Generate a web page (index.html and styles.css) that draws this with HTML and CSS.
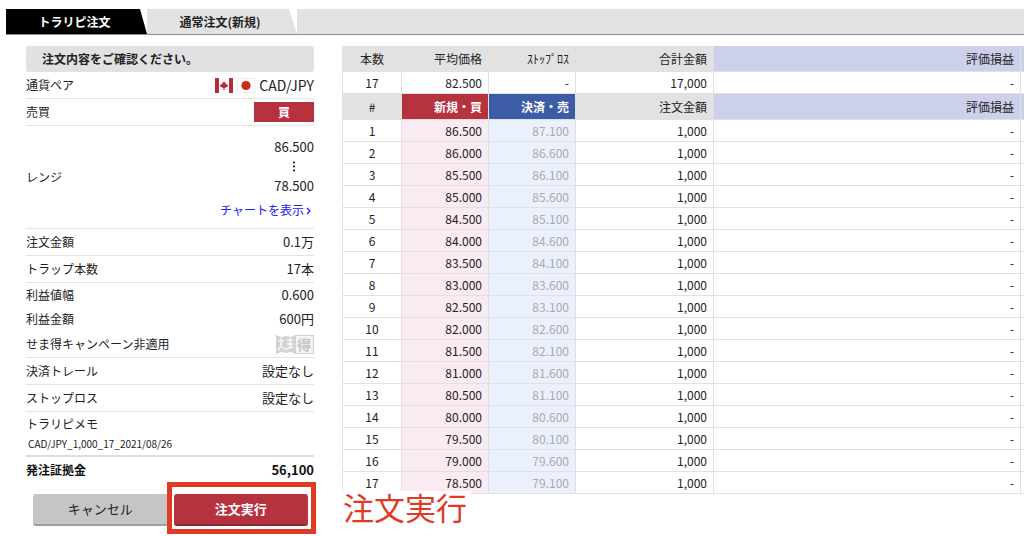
FILE: index.html
```html
<!DOCTYPE html>
<html lang="ja">
<head>
<meta charset="utf-8">
<meta name="viewport" content="width=device-width, initial-scale=1">
<title>トラリピ注文</title>
<link rel="stylesheet" href="styles.css">
</head>
<body>
<nav class="tabs">
  <a class="tab tab-active" href="#repeat">トラリピ注文</a>
  <a class="tab" href="#normal">通常注文(新規)</a>
  <span class="tab-rest"></span>
</nav>
<main class="content">
  <section class="summary">
    <h1 class="notice">注文内容をご確認ください。</h1>
    <dl class="details">
      <div class="row"><dt>通貨ペア</dt>
        <dd class="pair">
          <svg class="flag" viewBox="0 0 18 15" aria-hidden="true"><path fill="#fff" d="M0 0h18v15H0z"/><path fill="#b9283c" d="M0 0h4v15H0zM14 0h4v15h-4z"/><path fill="#b9283c" d="M9 3l1 2 1-.5-.2 2L13 6l-.5 1.500.700.700-3.700 2V12h-1v-1.800l-3.700-2 .700-.700L5 6l2.200.500L7 4.500 8 5z"/></svg>
          <svg class="flag" viewBox="0 0 18 15" aria-hidden="true"><path fill="#fff" stroke="#eee" d="M.5.5h17v14H.5z"/><circle cx="9" cy="7.500" r="4.600" fill="#c92a1c"/></svg>
          <span>CAD/JPY</span>
        </dd></div>
      <div class="row"><dt>売買</dt><dd class="side">買</dd></div>
      <div class="row row-range"><dt>レンジ</dt>
        <dd class="range">
          <span class="range-values"><span>86.500</span>
            <svg class="dots" viewBox="0 0 4 12" aria-hidden="true"><circle cx="2" cy="2" r="1"/><circle cx="2" cy="6" r="1"/><circle cx="2" cy="10" r="1"/></svg>
            <span>78.500</span></span>
          <a class="chart-link" href="#chart">チャートを表示<svg class="chevron" viewBox="0 0 6 8" aria-hidden="true"><path d="M1 1l3 3-3 3" fill="none" stroke="currentColor" stroke-width="1.300"/></svg></a>
        </dd></div>
      <div class="row"><dt>注文金額</dt><dd>0.1万</dd></div>
      <div class="row"><dt>トラップ本数</dt><dd>17本</dd></div>
      <div class="row row-plain"><dt>利益値幅</dt><dd>0.600</dd></div>
      <div class="row row-plain"><dt>利益金額</dt><dd>600円</dd></div>
      <div class="row"><dt>せま得キャンペーン非適用</dt>
        <dd><svg class="badge" viewBox="0 0 38 19" role="img" aria-label="せま得"><path fill="#d2d2d2" d="M0 0l5 2 5-1 5 1 4-2h19v19H19l-4-2-5 1-5-1-5 2z"/><path fill="#f4f4f4" d="M20 1h17v17H20z"/><path stroke="#f8f8f8" stroke-width="1.500" fill="none" d="M2 6h6M5 3v8l-3 4M11 5h6M11 9h6M14 3v10M10 14l7-2M6 12l4 3"/><text x="21" y="15" class="badge-text">得</text></svg></dd></div>
      <div class="row"><dt>決済トレール</dt><dd>設定なし</dd></div>
      <div class="row"><dt>ストップロス</dt><dd>設定なし</dd></div>
      <div class="row row-memo"><dt>トラリピメモ</dt><dd class="memo">CAD/JPY_1,000_17_2021/08/26</dd></div>
      <div class="row row-total"><dt>発注証拠金</dt><dd>56,100</dd></div>
    </dl>
    <div class="actions">
      <button class="button" type="button">キャンセル</button>
      <div class="submit">
        <button class="button button-primary" type="button">注文実行</button>
        <span class="callout-frame"></span>
        <span class="callout-text">注文実行</span>
      </div>
    </div>
  </section>
  <section class="orders">
    <table class="grid">
      <colgroup><col class="col-no"><col class="col-price"><col class="col-price"><col class="col-amount"><col><col class="col-next"></colgroup>
      <tbody>
        <tr><th>本数</th><th>平均価格</th><th>ｽﾄｯﾌﾟﾛｽ</th><th>合計金額</th><th class="profit">評価損益</th><th class="profit"></th></tr>
        <tr><td>17</td><td>82.500</td><td>-</td><td>17,000</td><td>-</td><td></td></tr>
        <tr><th>#</th><th class="buy-head">新規・買</th><th class="sell-head">決済・売</th><th>注文金額</th><th class="profit">評価損益</th><th class="profit"></th></tr>
      </tbody>
      <tbody class="lines">
        <tr><td>1</td><td>86.500</td><td>87.100</td><td>1,000</td><td>-</td><td></td></tr>
        <tr><td>2</td><td>86.000</td><td>86.600</td><td>1,000</td><td>-</td><td></td></tr>
        <tr><td>3</td><td>85.500</td><td>86.100</td><td>1,000</td><td>-</td><td></td></tr>
        <tr><td>4</td><td>85.000</td><td>85.600</td><td>1,000</td><td>-</td><td></td></tr>
        <tr><td>5</td><td>84.500</td><td>85.100</td><td>1,000</td><td>-</td><td></td></tr>
        <tr><td>6</td><td>84.000</td><td>84.600</td><td>1,000</td><td>-</td><td></td></tr>
        <tr><td>7</td><td>83.500</td><td>84.100</td><td>1,000</td><td>-</td><td></td></tr>
        <tr><td>8</td><td>83.000</td><td>83.600</td><td>1,000</td><td>-</td><td></td></tr>
        <tr><td>9</td><td>82.500</td><td>83.100</td><td>1,000</td><td>-</td><td></td></tr>
        <tr><td>10</td><td>82.000</td><td>82.600</td><td>1,000</td><td>-</td><td></td></tr>
        <tr><td>11</td><td>81.500</td><td>82.100</td><td>1,000</td><td>-</td><td></td></tr>
        <tr><td>12</td><td>81.000</td><td>81.600</td><td>1,000</td><td>-</td><td></td></tr>
        <tr><td>13</td><td>80.500</td><td>81.100</td><td>1,000</td><td>-</td><td></td></tr>
        <tr><td>14</td><td>80.000</td><td>80.600</td><td>1,000</td><td>-</td><td></td></tr>
        <tr><td>15</td><td>79.500</td><td>80.100</td><td>1,000</td><td>-</td><td></td></tr>
        <tr><td>16</td><td>79.000</td><td>79.600</td><td>1,000</td><td>-</td><td></td></tr>
        <tr><td>17</td><td>78.500</td><td>79.100</td><td>1,000</td><td>-</td><td></td></tr>
      </tbody>
    </table>
  </section>
</main>
</body>
</html>
```
FILE: styles.css
```css
* { box-sizing: border-box; }
body {
  margin: 0;
  padding-top: 9px;
  background: #fff;
  color: #222;
  font: 12px/20px "Noto Sans CJK JP", sans-serif;
}
.tabs {
  display: flex;
  height: 26px;
  margin-left: 6px;
  border-bottom: 1px solid #8b8f8c;
}
.tab {
  width: 150px;
  padding-right: 4px;
  background: #e2e2e2;
  clip-path: polygon(0 0, 142px 0, 100% 100%, 0 100%);
  color: #222;
  font-weight: bold;
  line-height: 25px;
  text-align: center;
  text-decoration: none;
}
.tab-active {
  width: 141px;
  background: #000;
  clip-path: polygon(0 0, 134px 0, 100% 100%, 0 100%);
  color: #fff;
}
.tab-rest { flex: 1; background: #e2e2e2; }
.content { display: flex; gap: 28px; padding: 11px 0 10px 26px; }
.summary { flex: none; width: 288px; }
.notice {
  margin: 0;
  padding: 0 16px;
  border-radius: 3px;
  background: #e1e1e1;
  font-size: 12px;
  line-height: 26px;
}
.details { margin: 0; }
.row {
  display: flex;
  align-items: center;
  justify-content: space-between;
  height: 27px;
  border-bottom: 1px solid #e3e3e3;
}
.row dd { margin: 0; font-size: 13px; }
.row-plain { height: 24px; border-bottom: 0; }
.row-range { height: 103px; }
.row .pair { display: flex; align-items: center; gap: 4px; font-size: 14px; }
.flag { width: 18px; height: 15px; }
.row .side {
  width: 60px;
  background: #b7323f;
  color: #fff;
  font-size: 12px;
  font-weight: bold;
  text-align: center;
}
.range { display: flex; flex-direction: column; align-items: flex-end; gap: 4px; padding-top: 2px; }
.range-values { display: flex; flex-direction: column; align-items: center; }
.dots { width: 4px; height: 19px; }
.chart-link { color: #2020f0; font-size: 12px; text-decoration: none; }
.chevron { width: 6px; height: 8px; margin: 0 2px; }
.badge { display: block; width: 38px; height: 19px; overflow: visible; }
.badge-text { font-size: 14px; font-weight: bold; fill: #c4c4c4; }
.row-memo {
  flex-direction: column;
  align-items: flex-start;
  justify-content: center;
  height: 45px;
  border-bottom: 2px solid #dedede;
}
.row .memo { padding-left: 2px; font-size: 10px; }
.row-total { height: 25px; border: 0; color: #111; font-weight: bold; }
.actions { display: flex; gap: 6px; padding: 12px 6px 0 7px; }
.submit { position: relative; flex: 1; display: flex; }
.button {
  flex: 1;
  height: 32px;
  padding: 0;
  border: 0;
  border-bottom: 2px solid #9e9e9e;
  border-radius: 3px;
  background: #c5c5c5;
  color: #222;
  font: 13px/28px "Noto Sans CJK JP", sans-serif;
}
.button-primary { border-color: #8c2530; background: #b7323f; color: #fff; font-weight: bold; }
.callout-frame {
  position: absolute;
  inset: -12px -8px -8px -7px;
  border: 5px solid #e03a24;
}
.callout-text {
  position: absolute;
  top: -3px;
  left: 100%;
  margin-left: 32px;
  padding: 0 4px 0 3px;
  background: #fff;
  color: #e03a24;
  font-size: 31px;
  line-height: 32px;
  white-space: nowrap;
}
.orders { flex: 1; min-width: 0; }
.grid { width: 100%; table-layout: fixed; border-spacing: 0; }
.col-no { width: 60px; }
.col-price { width: 87px; }
.col-amount { width: 138px; }
.col-next { width: 3px; }
.grid th, .grid td {
  height: 22px;
  padding: 0 6px 0 0;
  border-right: 1px solid #e1e1e1;
  border-bottom: 1px solid #e1e1e1;
  line-height: 20px;
  text-align: right;
}
.grid th { height: 26px; background: #e2e2e2; font-weight: normal; }
.grid th:first-child, .grid td:first-child { padding: 0; border-left: 1px solid #e1e1e1; text-align: center; }
.grid th:last-child, .grid td:last-child { padding: 0; border-right: 0; }
.grid .profit { background: #ccd0ea; }
.grid .buy-head { background: #b7323f; color: #fff; font-weight: bold; }
.grid .sell-head { background: #3d5ca6; color: #fff; font-weight: bold; }
.lines td:nth-child(2) { background: #faeaf2; }
.lines td:nth-child(3) { background: #eaf1fd; color: #aaa; }
```
